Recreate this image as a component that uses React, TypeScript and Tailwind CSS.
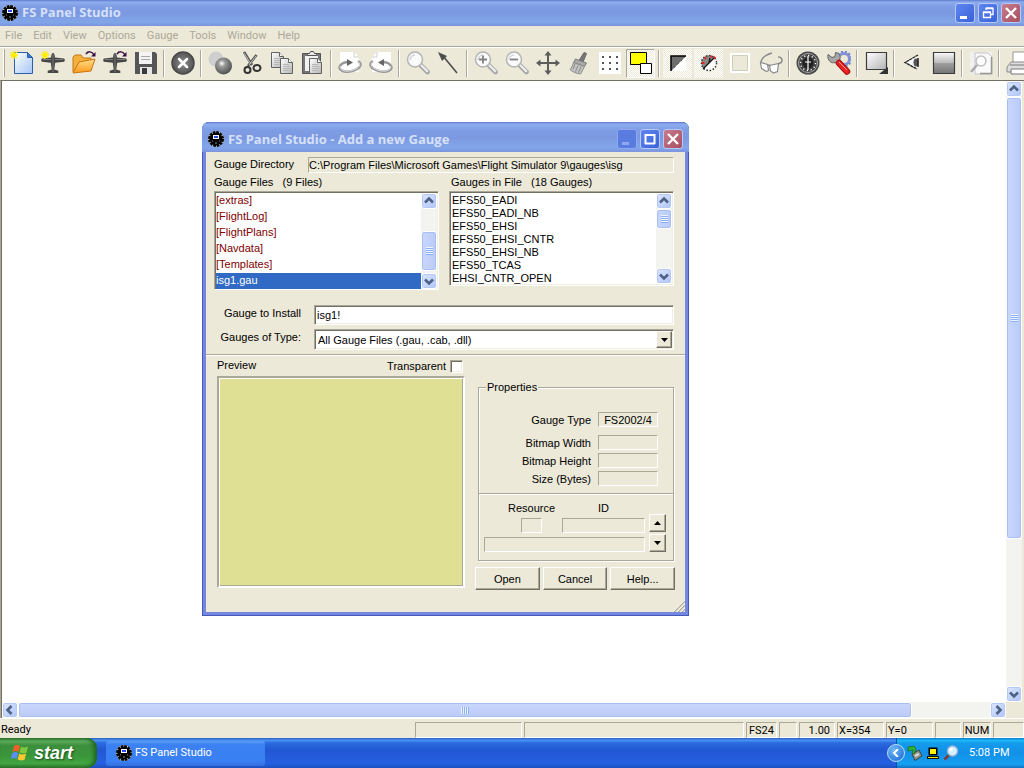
import React, { useState } from 'react';

const gaugeFiles = ['[extras]', '[FlightLog]', '[FlightPlans]', '[Navdata]', '[Templates]', 'isg1.gau'];
const gauges = [
  'EFS50_EADI',
  'EFS50_EADI_NB',
  'EFS50_EHSI',
  'EFS50_EHSI_CNTR',
  'EFS50_EHSI_NB',
  'EFS50_TCAS',
  'EHSI_CNTR_OPEN',
];
const menus = ['File', 'Edit', 'View', 'Options', 'Gauge', 'Tools', 'Window', 'Help'];

const titleBar = 'bg-[linear-gradient(#5f7bd0,#8eadee_8%,#7f9de4_25%,#7b98e0_50%,#82a6e9_85%,#7b95df)]';
const sunken = 'border border-[#aca899] border-r-white border-b-white';
const deepSunken =
  'border border-[#aca899] border-r-white border-b-white shadow-[inset_1px_1px_0_#716f64,inset_-1px_-1px_0_#f1efe2]';
const raised =
  'border border-white border-r-[#716f64] border-b-[#716f64] bg-[#ece9d8] shadow-[inset_-1px_-1px_0_#aca899]';
const checker = 'bg-[repeating-conic-gradient(#ffffff_0_25%,#ece9d8_0_50%)] bg-[length:2px_2px]';

// Shared gradients for the toolbar drawings
const Gradients = () => (
  <svg width="0" height="0" className="absolute" aria-hidden="true">
    <defs>
      <linearGradient id="paper" x1="0" y1="0" x2="1" y2="1">
        <stop offset="0" stopColor="#ffffff" />
        <stop offset="1" stopColor="#a5c6f3" />
      </linearGradient>
      <linearGradient id="folder" x1="0" y1="0" x2="0" y2="1">
        <stop offset="0" stopColor="#ffe08a" />
        <stop offset="1" stopColor="#f79a1c" />
      </linearGradient>
      <linearGradient id="steel" x1="0" y1="0" x2="1" y2="1">
        <stop offset="0" stopColor="#ffffff" />
        <stop offset="1" stopColor="#b4b4b4" />
      </linearGradient>
      <linearGradient id="screen" x1="0" y1="0" x2="0" y2="1">
        <stop offset="0" stopColor="#fafafa" />
        <stop offset="0.5" stopColor="#b9b9b9" />
        <stop offset="0.5" stopColor="#a0a0a0" />
        <stop offset="1" stopColor="#757575" />
      </linearGradient>
      <radialGradient id="ball" cx="0.4" cy="0.35" r="0.65">
        <stop offset="0" stopColor="#ffffff" />
        <stop offset="0.3" stopColor="#9b9b9b" />
        <stop offset="1" stopColor="#505050" />
      </radialGradient>
      <radialGradient id="disc" cx="0.5" cy="0.5" r="0.5">
        <stop offset="0" stopColor="#8b8b8b" />
        <stop offset="1" stopColor="#555555" />
      </radialGradient>
    </defs>
  </svg>
);

const Icon: React.FC<{ children: React.ReactNode; className?: string }> = ({ children, className = '' }) => (
  <svg viewBox="0 0 24 24" className={`size-6 shrink-0 ${className}`} fill="none" aria-hidden="true">
    {children}
  </svg>
);

const AppIcon = () => (
  <svg viewBox="0 0 16 16" className="size-4 shrink-0" aria-hidden="true">
    <circle cx="8" cy="8" r="8" fill="#e4e9f5" />
    <circle cx="8" cy="8" r="6.4" fill="#000" />
    <circle cx="8" cy="8" r="7" fill="none" stroke="#000" strokeWidth="2" strokeDasharray="2.9 0.765" />
    <path d="M5 4h6v4H5z" fill="#fff" />
    <path d="M6 5h4v2H6z" fill="#2a4bea" />
    <path d="M4 10h1M11 10h1M7 12h2" stroke="#888" />
  </svg>
);

const Spark = () => <path d="M4 0v8M0 4h8M1 1l6 6M7 1L1 7" stroke="#ffee00" strokeWidth="1.3" />;
const RedoMark = () => (
  <>
    <path d="M14 3c2-3 6-3 8 1" stroke="#3d0d45" strokeWidth="1.5" />
    <path d="M23.500 1v4.500h-4.500z" fill="#3d0d45" />
  </>
);
const Plane = () => (
  <>
    <path
      d="M12 2c1.200 0 1.800 1.600 1.900 4.500L23 7.500c1 .3 1 3 0 3.200l-8.800 1-.9 6.800 4 1.200v2.300H6.700v-2.300l4-1.200-.9-6.800-8.800-1c-1-.2-1-2.900 0-3.200l9.100-1C10.200 3.600 10.800 2 12 2z"
      fill="#474747"
    />
    <path d="M2 8.500h8M14 8.500h8" stroke="#7c7c7c" />
    <path d="M12 3v18" stroke="#777" />
  </>
);
const Lens = () => (
  <>
    <path d="M15 14.500l6.500 6.500" stroke="#a4a4a4" strokeWidth="4.600" strokeLinecap="round" />
    <path d="M15 14l6.200 6.200" stroke="#ececec" strokeWidth="2.400" strokeLinecap="round" />
    <circle cx="9" cy="8.500" r="7.500" fill="#fafafa" stroke="#b4b4b4" strokeWidth="1.500" />
    <path d="M4 9a5 5 0 0 1 5-5" stroke="#d4d4d4" strokeWidth="1.500" />
  </>
);
const Sheet = ({ x, y }: { x: number; y: number }) => (
  <g transform={`translate(${x} ${y})`}>
    <path d="M.5.5h8l4 4v11H.5z" fill="url(#steel)" stroke="#626262" />
    <path d="M8.500.5v4h4" fill="#fff" stroke="#626262" />
    <path d="M3 6.500h6M3 8.500h7M3 10.500h7M3 12.500h5" stroke="#b6b6b6" />
  </g>
);

const toolGroups: { label: string; icon: React.ReactNode; look?: string }[][] = [
  [
    {
      label: 'New panel',
      icon: (
        <Icon>
          <path d="M4.500 1.500h13l5 5v16h-18z" fill="url(#paper)" stroke="#2b5fae" />
          <path d="M17.500 1.500v5h5z" fill="#3b78cf" stroke="#2b5fae" />
          <Spark />
        </Icon>
      ),
    },
    { label: 'New aircraft', icon: <Icon><Plane /><Spark /></Icon> },
    {
      label: 'Open panel',
      icon: (
        <Icon>
          <path d="M1 21V6l2-2h6l2 3h8v4" fill="#f4b03c" stroke="#cc7412" />
          <path d="M1 22l6-11 16-3-4 12z" fill="url(#folder)" stroke="#cc7412" />
          <RedoMark />
        </Icon>
      ),
    },
    { label: 'Open aircraft', icon: <Icon><Plane /><RedoMark /></Icon> },
    {
      label: 'Save',
      icon: (
        <Icon>
          <path d="M1 1h20l2 2v20H1z" fill="#565656" />
          <path d="M5 1h13v12H5z" fill="#f4f4f4" />
          <path d="M7 5.500h9M7 8.500h9" stroke="#a8a8a8" />
          <path d="M6 16h12v7H6z" fill="#e6e6e6" />
          <path d="M8 17h5v6H8z" fill="#3b3b3b" />
        </Icon>
      ),
    },
  ],
  [
    {
      label: 'Close',
      icon: (
        <Icon>
          <circle cx="12" cy="12" r="11" fill="url(#disc)" stroke="#484848" strokeWidth="1.500" />
          <path d="M8 8l8 8M16 8l-8 8" stroke="#fff" strokeWidth="2.500" strokeLinecap="round" />
        </Icon>
      ),
    },
  ],
  [
    {
      label: 'Gauge properties',
      icon: (
        <Icon>
          <circle cx="8" cy="8" r="7.500" fill="#cfcfcf" />
          <circle cx="15.500" cy="15" r="8.500" fill="url(#ball)" />
        </Icon>
      ),
    },
    {
      label: 'Cut',
      icon: (
        <Icon>
          <path d="M5 1l8 13M17.500 4L9 15" stroke="#555" strokeWidth="2.600" />
          <path d="M5 2l7 11M17 5l-7 9" stroke="#ccc" strokeWidth="0.900" />
          <circle cx="8.500" cy="19" r="3" stroke="#333" strokeWidth="2" />
          <ellipse cx="18" cy="17" rx="3.500" ry="3" stroke="#333" strokeWidth="2" />
        </Icon>
      ),
    },
    { label: 'Copy', icon: <Icon><Sheet x={1} y={1} /><Sheet x={10} y={7} /></Icon> },
    {
      label: 'Paste',
      icon: (
        <Icon>
          <path d="M1.500 2.500h18v20h-18z" fill="#777" stroke="#555" />
          <path d="M4 5h13v15H4z" fill="#f2f2f2" />
          <path d="M6.500 4.500v-2h2l1-2h3l1 2h2v2z" fill="#e8e8e8" stroke="#555" />
          <Sheet x={8} y={7} />
        </Icon>
      ),
    },
  ],
  [
    {
      label: 'Undo',
      icon: (
        <Icon>
          <path d="M2 1h14l5 5v15H2z" fill="#fff" />
          <path d="M16 1v5h5" stroke="#cfcfcf" />
          <path d="M20 10c5 3 2 8-6 10-8 2-14-1-12-5 1.500-3 5-4 9-4" stroke="#979797" strokeWidth="2.600" />
          <path d="M20 10.500c4 3 1 7-6 9-8 2-13-1-11.500-4.500" stroke="#e4e4e4" />
          <path d="M9 8l6 3.500L9 15z" fill="#666" />
        </Icon>
      ),
    },
    {
      label: 'Redo',
      icon: (
        <Icon>
          <path d="M3 6l5-5h14v20H3z" fill="#fff" />
          <path d="M8 1v5H3" stroke="#cfcfcf" />
          <path d="M4 10c-5 3-2 8 6 10 8 2 14-1 12-5-1.500-3-5-4-9-4" stroke="#979797" strokeWidth="2.600" />
          <path d="M4 10.500c-4 3-1 7 6 9 8 2 13-1 11.500-4.500" stroke="#e4e4e4" />
          <path d="M15 8l-6 3.500 6 3.500z" fill="#666" />
        </Icon>
      ),
    },
  ],
  [
    { label: 'Find', icon: <Icon><Lens /></Icon> },
    {
      label: 'Select',
      icon: (
        <Icon>
          <path d="M6 5l14 17" stroke="#4d4d4d" strokeWidth="1.600" />
          <path d="M1 1l9 4-5 5z" fill="#4d4d4d" />
        </Icon>
      ),
    },
  ],
  [
    { label: 'Zoom in', icon: <Icon><Lens /><path d="M9 4.500v8M5 8.500h8" stroke="#808080" strokeWidth="1.800" /></Icon> },
    { label: 'Zoom out', icon: <Icon><Lens /><path d="M5 8.500h8" stroke="#808080" strokeWidth="1.800" /></Icon> },
    {
      label: 'Move',
      icon: (
        <Icon>
          <path d="M12 2v20M2 12h20" stroke="#5c5c5c" strokeWidth="2" />
          <path d="M12 0l3.500 4.500h-7zM12 24l3.500-4.500h-7zM0 12l4.500-3.500v7zM24 12l-4.500-3.500v7z" fill="#5c5c5c" />
        </Icon>
      ),
    },
    {
      label: 'Brush',
      icon: (
        <Icon>
          <path d="M17 1.500l2.500 1-3.500 8.500-4-1.500z" fill="#777" stroke="#666" />
          <path d="M8.500 8l11 4-2 3.500L6.500 11.500z" fill="#aaa" stroke="#777" />
          <path d="M6.500 11.500L17.500 15.500l-4 7.500c-4-.5-8-2-10.500-4.500 1.500-1.500 2.500-4 3.500-7z" fill="#c4c4c4" stroke="#8a8a8a" />
          <path d="M8 13l-2 5M11 14.500l-2.500 6M14 15.500l-2.500 6" stroke="#888" />
        </Icon>
      ),
    },
    {
      label: 'Grid',
      icon: (
        <Icon>
          <path d="M1 1h22v22H1z" fill="#fff" />
          <path d="M4 5h2v2H4zM11 5h2v2h-2zM18 5h2v2h-2zM4 11h2v2H4zM11 11h2v2h-2zM18 11h2v2h-2zM4 17h2v2H4zM11 17h2v2h-2zM18 17h2v2h-2z" fill="#555" />
        </Icon>
      ),
    },
    {
      label: 'Arrange',
      look: `${checker} border border-[#aca899] border-r-white border-b-white`,
      icon: (
        <Icon>
          <path d="M1.500 1.500h16v12h-16z" fill="#ffff00" stroke="#000" />
          <path d="M11.500 12.500h11v10h-11z" fill="#fff" stroke="#000" />
        </Icon>
      ),
    },
  ],
  [
    {
      label: 'Night view',
      look: checker,
      icon: (
        <Icon>
          <path d="M5 5h15L5 20z" fill="#6e6e6e" />
          <path d="M20 5v15H5z" fill="#fff" />
          <path d="M5 20V5h15" stroke="#000" strokeWidth="1.500" />
          <path d="M20 5L5 20" stroke="#333" strokeDasharray="1 1" />
        </Icon>
      ),
    },
    {
      label: 'Night gauges',
      look: checker,
      icon: (
        <Icon>
          <circle cx="12" cy="12" r="7.500" fill="#fff" />
          <path d="M17.500 6.500A7.600 7.600 0 0 0 6.500 17.500z" fill="#888" />
          <circle cx="12" cy="12" r="7.500" stroke="#333" strokeWidth="1.500" strokeDasharray="1.500 1.700" />
          <path d="M6 18L18 6M12 12l1-5" stroke="#111" strokeWidth="1.300" />
          <path d="M5 12h2.500M7.500 6.500l1.500 1.500M17 6l1.500 1.500M14 4.500v2" stroke="#f02020" strokeWidth="1.800" />
        </Icon>
      ),
    },
    {
      label: 'Frame',
      icon: (
        <Icon>
          <path d="M3 3h18v18H3z" stroke="#fff" strokeWidth="2" />
          <path d="M4.500 4.500h15v15h-15z" stroke="#cfccba" />
        </Icon>
      ),
    },
    {
      label: 'Preview',
      icon: (
        <Icon>
          <path d="M2 12C2 7 6 4 13 2M22 12c2-3 1-6-3-6" stroke="#8c8c8c" strokeWidth="1.500" />
          <path d="M1.500 11.500l7 2 1 6-2 1-5-3zM10.500 14.500l9-2-1 8-4 1.500-3-2z" fill="#fff" stroke="#8a8a8a" strokeWidth="1.200" />
          <path d="M8.500 14l3 .5M19 13l3-1.500" stroke="#8a8a8a" strokeWidth="1.500" />
        </Icon>
      ),
    },
  ],
  [
    {
      label: 'Add gauge',
      icon: (
        <Icon>
          <circle cx="12" cy="12" r="11.500" fill="#484848" />
          <circle cx="12" cy="12" r="9.500" fill="#444" stroke="#aaa" />
          <circle cx="12" cy="12" r="7.500" stroke="#fff" strokeWidth="1.400" strokeDasharray="1.200 2.700" />
          <circle cx="12" cy="12" r="5.500" fill="#222" />
          <path d="M12 5v14M9 11h6" stroke="#fff" strokeWidth="1.200" />
        </Icon>
      ),
    },
    {
      label: 'Tools',
      icon: (
        <Icon>
          <circle cx="17" cy="8" r="5.500" stroke="#8291d4" strokeWidth="3" />
          <circle cx="17" cy="8" r="7.500" stroke="#6577c5" strokeWidth="1.500" strokeDasharray="2 2" />
          <path d="M1 3.500l4 3 3-1 .5-4C13 2 14 6 12.500 9l2 2-4 3-2-2.500C4 13 0 9 1 3.500z" fill="#a7a7a7" stroke="#626262" />
          <path d="M12 12l8 8.500" stroke="#9f1010" strokeWidth="6.500" strokeLinecap="round" />
          <path d="M12 12l8 8.500" stroke="#ee2222" strokeWidth="4.500" strokeLinecap="round" />
          <path d="M12 11l8 8" stroke="#ff9b8e" />
        </Icon>
      ),
    },
  ],
  [
    {
      label: 'Background',
      icon: (
        <Icon>
          <path d="M2.500 1.500h20v17h-20z" fill="url(#steel)" stroke="#3c3c3c" strokeWidth="1.200" />
          <path d="M24 16v7h-9z" fill="#333" />
        </Icon>
      ),
    },
  ],
  [
    {
      label: 'View',
      icon: (
        <Icon>
          <path d="M15 5c4 3 4 10 0 13L5 11.500z" fill="#f8f8f8" />
          <path d="M17 4L4 11.500 16 18" stroke="#222" strokeWidth="1.400" strokeDasharray="3 0.500" />
          <ellipse cx="15" cy="11.500" rx="2.500" ry="4" fill="#555" />
          <path d="M17 7v9" stroke="#222" strokeWidth="1.500" />
        </Icon>
      ),
    },
    {
      label: 'Shading',
      icon: (
        <Icon>
          <path d="M1.500 1.500h21v21h-21z" fill="url(#screen)" stroke="#3c3c3c" strokeWidth="1.200" />
        </Icon>
      ),
    },
  ],
  [
    {
      label: 'Print preview',
      icon: (
        <Icon>
          <path d="M1 1h22v22H1z" fill="#f1f1f1" />
          <path d="M6 2h13l4 4v17H6z" fill="#fafafa" stroke="#c4c4c4" />
          <path d="M22.500 6v16.500H11" stroke="#969696" strokeWidth="1.500" />
          <circle cx="12" cy="10" r="5" fill="#fff" stroke="#c0c0c0" strokeWidth="1.500" />
          <path d="M8 14l-6 7" stroke="#aaa" strokeWidth="2.500" />
        </Icon>
      ),
    },
  ],
  [
    {
      label: 'Print',
      icon: (
        <Icon>
          <path d="M7 12V1h12v11" fill="#fff" stroke="#999" />
          <path d="M1 16l4-5h18v10H1z" fill="#ddd" stroke="#8a8a8a" />
          <path d="M4 14h18M5 18h18v5H5z" fill="#fff" stroke="#777" />
        </Icon>
      ),
    },
  ],
];

type Direction = 'up' | 'down' | 'left' | 'right';
const chevrons: Record<Direction, string> = {
  up: 'M4 9.500l4-4 4 4',
  down: 'M4 6.500l4 4 4-4',
  left: 'M9.500 4l-4 4 4 4',
  right: 'M6.500 4l4 4-4 4',
};

const ScrollButton: React.FC<{ dir: Direction }> = ({ dir }) => (
  <button
    type="button"
    aria-label={`Scroll ${dir}`}
    className="size-4 shrink-0 rounded-[3px] border border-white bg-[linear-gradient(135deg,#dce6fe,#b0c5f7)] shadow-[inset_0_0_0_1px_#b5c8f5]"
  >
    <svg viewBox="0 0 16 16" className="-m-px size-4" fill="none" stroke="#4d6185" strokeWidth="2.600">
      <path d={chevrons[dir]} />
    </svg>
  </button>
);

// XP scrollbar; thumbClass sets where the thumb starts and how long it is
const ScrollBar: React.FC<{ horizontal?: boolean; thumbClass: string }> = ({ horizontal, thumbClass }) => (
  <div className={`flex bg-[#f3f3ef] ${horizontal ? 'h-4 flex-row' : 'w-4 flex-col'}`}>
    <ScrollButton dir={horizontal ? 'left' : 'up'} />
    <div className={`flex flex-1 ${horizontal ? 'flex-row' : 'flex-col'}`}>
      <div
        className={`flex items-center justify-center rounded-[3px] border border-white shadow-[inset_0_0_0_1px_#a9bff0] ${
          horizontal ? 'h-4 bg-[linear-gradient(#c9d7fc,#bacbf9)]' : 'w-4 bg-[linear-gradient(90deg,#c9d7fc,#bacbf9)]'
        } ${thumbClass}`}
      >
        <div
          className={
            horizontal
              ? 'h-[7px] w-2 bg-[repeating-linear-gradient(90deg,#eef4fe_0_1px,#8cb0f8_1px_2px)]'
              : 'h-2 w-[7px] bg-[repeating-linear-gradient(#eef4fe_0_1px,#8cb0f8_1px_2px)]'
          }
        />
      </div>
    </div>
    <ScrollButton dir={horizontal ? 'right' : 'down'} />
  </div>
);

const CaptionButton: React.FC<{ kind: 'minimize' | 'restore' | 'maximize' | 'close'; faded?: boolean }> = ({ kind, faded }) => (
  <button
    type="button"
    aria-label={kind}
    className={`flex size-5 items-center justify-center rounded-[3px] border ${faded ? 'border-[#8fa9ee]' : 'border-[#b9c9f5]'} ${
      kind === 'close'
        ? 'bg-[linear-gradient(135deg,#c57c8c,#a84f60)]'
        : faded
          ? 'bg-[#5a7be0]'
          : 'bg-[linear-gradient(135deg,#5e86f0,#3a62da)]'
    }`}
  >
    <svg viewBox="0 0 18 18" className="size-[18px]" fill="none" stroke={faded ? '#8fa9ee' : '#fff'}>
      {kind === 'minimize' && <path d="M4 13.500h7" strokeWidth="3" />}
      {kind === 'maximize' && <path d="M4.500 4v10M13.500 4v10M4 13.500h10M4 5h10" strokeWidth="2" />}
      {kind === 'restore' && <path d="M7 6V4.500h7v6h-2M4.500 8.500h7v5h-7zM4 8h8M7 4h7" strokeWidth="1.300" />}
      {kind === 'close' && <path d="M4 4l10 10M14 4L4 14" strokeWidth="2.400" />}
    </svg>
  </button>
);

const ReadOnlyRow: React.FC<{ id: string; label: string; value?: string }> = ({ id, label, value = '' }) => (
  <div className="flex h-[15px] items-center justify-end gap-[7px]">
    <label htmlFor={id}>{label}</label>
    <input id={id} readOnly value={value} className={`h-[15px] w-[60px] text-center ${sunken}`} />
  </div>
);

const DialogButton: React.FC<{ children: React.ReactNode }> = ({ children }) => (
  <button type="button" className={`h-[23px] flex-1 ${raised}`}>
    {children}
  </button>
);

const SpinButton: React.FC<{ label: string; up?: boolean }> = ({ label, up }) => (
  <button type="button" aria-label={label} className={`flex h-[18px] w-[17px] items-center justify-center ${raised}`}>
    <svg viewBox="0 0 7 4" className="h-1 w-[7px]" fill="#000">
      <path d={up ? 'M0 4l3.500-4L7 4z' : 'M0 0l3.500 4L7 0z'} />
    </svg>
  </button>
);

const AddGaugeDialog = () => {
  const [file, setFile] = useState('isg1.gau');
  const [install, setInstall] = useState('isg1!');

  return (
    <section
      role="dialog"
      aria-label="Add a new Gauge"
      className="absolute top-[122px] left-[202px] w-[487px] rounded-t-[7px] bg-[#7488e0] p-1 pt-0 font-['Liberation_Sans',Arial,sans-serif] text-[11px] leading-4 shadow-[inset_0_0_0_1px_#4359bb]"
    >
      <header className={`-mx-1 flex h-[30px] items-center gap-1 rounded-t-[7px] px-[6px] pt-[3px] ${titleBar}`}>
        <AppIcon />
        <h2 className="flex-1 font-['Open_Sans',sans-serif] text-[13px] font-bold text-[#d6e0fa]">
          FS Panel Studio - Add a new Gauge
        </h2>
        <div className="flex gap-[3px]">
          <CaptionButton kind="minimize" faded />
          <CaptionButton kind="maximize" />
          <CaptionButton kind="close" />
        </div>
      </header>

      <div className="bg-[#ece9d8] pt-[5px]">
        <div className="pr-[11px] pl-2">
          <div className="flex">
            <label htmlFor="directory" className="w-[94px] leading-[14px]">Gauge Directory</label>
            <input
              id="directory"
              readOnly
              value="C:\Program Files\Microsoft Games\Flight Simulator 9\gauges\isg"
              className={`h-4 min-w-0 flex-1 ${sunken}`}
            />
          </div>

          <div className="grid grid-cols-2 items-start gap-[10px]">
            <div>
              <h3 id="files-label" className="h-[18px] leading-[18px]">Gauge Files &nbsp; (9 Files)</h3>
              <div className={`flex bg-white p-px pb-0 ${deepSunken}`}>
                <ul role="listbox" aria-labelledby="files-label" className="flex-1">
                  {gaugeFiles.map((name) => (
                    <li
                      key={name}
                      role="option"
                      aria-selected={name === file}
                      onClick={() => setFile(name)}
                      className={`h-4 leading-[14px] ${name === file ? 'bg-[#316ac5] text-white' : 'text-[#800000]'}`}
                    >
                      {name}
                    </li>
                  ))}
                </ul>
                <ScrollBar thumbClass="mt-[22px] h-10" />
              </div>
            </div>
            <div>
              <h3 id="gauges-label" className="h-[18px] pl-0.5 leading-[18px]">Gauges in File &nbsp; (18 Gauges)</h3>
              <div className={`flex bg-white p-px ${deepSunken}`}>
                <ul role="listbox" aria-labelledby="gauges-label" className="flex-1">
                  {gauges.map((name) => (
                    <li key={name} role="option" aria-selected={false} className="h-[13px] pl-px leading-[14px]">
                      {name}
                    </li>
                  ))}
                </ul>
                <ScrollBar thumbClass="h-5" />
              </div>
            </div>
          </div>

          <div className="mt-[15px] grid grid-cols-[87px_1fr] gap-x-[13px] gap-y-1 pb-1">
            <label htmlFor="install" className="text-right">Gauge to Install</label>
            <input
              id="install"
              value={install}
              onChange={(e) => setInstall(e.target.value)}
              className={`h-5 w-full bg-white px-0.5 ${deepSunken}`}
            />
            <label htmlFor="type" className="text-right">Gauges of Type:</label>
            <div className="relative">
              <select id="type" className={`block h-[21px] w-full appearance-none bg-white px-[3px] ${deepSunken}`}>
                <option>All Gauge Files (.gau, .cab, .dll)</option>
              </select>
              <span className={`pointer-events-none absolute top-0.5 right-0.5 flex h-[17px] w-4 items-center justify-center ${raised}`}>
                <svg viewBox="0 0 7 4" className="h-1 w-[7px]"><path d="M0 0l3.500 4L7 0z" /></svg>
              </span>
            </div>
          </div>
        </div>

        <hr className="h-0.5 border-t border-b border-t-[#aca899] border-b-white" />

        <div className="flex gap-[10px] pr-[10px] pl-[11px]">
          <div className="flex flex-1 flex-col pt-px">
            <div className="flex h-[19px] items-start justify-between">
              <span>Preview</span>
              <label className="flex items-center gap-1 pt-px pr-0.5">
                Transparent
                <input type="checkbox" className={`size-[13px] appearance-none bg-white ${deepSunken}`} />
              </label>
            </div>
            <div className="h-[212px] border-2 border-[#aca899] border-r-white border-b-white bg-[#e0e094] shadow-[inset_1px_1px_0_#fff,inset_-1px_-1px_0_#aca899]" />
          </div>

          <div className="w-[200px] pt-[31px]">
            <fieldset className="relative mr-px ml-[3px] border border-[#aca899] pt-6 shadow-[1px_1px_0_#fff,inset_1px_1px_0_#fff]">
              <legend className="absolute -top-[9px] left-[7px] bg-[#ece9d8] px-px">Properties</legend>
              <div className="flex flex-col gap-[3px] pr-[15px]">
                <div className="mb-[5px]">
                  <ReadOnlyRow id="gauge-type" label="Gauge Type" value="FS2002/4" />
                </div>
                <ReadOnlyRow id="bitmap-width" label="Bitmap Width" />
                <ReadOnlyRow id="bitmap-height" label="Bitmap Height" />
                <ReadOnlyRow id="size" label="Size (Bytes)" />
              </div>
              <hr className="mt-[7px] h-0.5 border-t border-b border-t-[#aca899] border-b-white" />
              <div className="flex items-end gap-1 pt-[5px] pr-[7px] pb-2 pl-[5px]">
                <div className="flex flex-1 flex-col gap-1">
                  <div className="flex justify-between">
                    <label className="flex flex-col items-center gap-0.5 pl-6">
                      Resource
                      <input readOnly className={`h-[15px] w-[21px] ${sunken}`} />
                    </label>
                    <label className="flex flex-col items-center gap-0.5">
                      ID
                      <input readOnly className={`h-[15px] w-[83px] ${sunken}`} />
                    </label>
                  </div>
                  <input readOnly aria-label="Resource name" className={`h-[15px] w-full ${sunken}`} />
                </div>
                <div className="flex flex-col gap-0.5">
                  <SpinButton label="Next resource" up />
                  <SpinButton label="Previous resource" />
                </div>
              </div>
            </fieldset>
            <div className="mt-[6px] flex gap-[3px]">
              <DialogButton>Open</DialogButton>
              <DialogButton>Cancel</DialogButton>
              <DialogButton>Help...</DialogButton>
            </div>
          </div>
        </div>

        <footer className="flex h-[22px] items-end justify-end">
          <svg viewBox="0 0 12 12" className="size-3" fill="none">
            <path d="M1 12L12 1M5 12l7-7M9 12l3-3" stroke="#aca899" strokeWidth="1.500" />
            <path d="M0 12L12 0M4 12l8-8M8 12l4-4" stroke="#fff" strokeWidth="0.800" />
          </svg>
        </footer>
      </div>
    </section>
  );
};

const StatusBar = () => (
  <footer className="flex h-5 gap-0.5 border-t border-white bg-[#ece9d8] pt-[3px] font-['Roboto',sans-serif] text-[11px] leading-[15px]">
    <span className="w-[413px] pl-px">Ready</span>
    <span className={`w-[107px] ${sunken}`} />
    <span className={`flex-1 ${sunken}`} />
    <span className={`w-[31px] text-center ${sunken}`}>FS24</span>
    <span className={`w-[18px] ${sunken}`} />
    <span className={`w-9 pr-1 text-right ${sunken}`}>1.00</span>
    <span className={`w-[47px] pl-px ${sunken}`}>X=354</span>
    <span className={`w-[47px] pl-px ${sunken}`}>Y=0</span>
    <span className={`w-[26px] ${sunken}`} />
    <span className={`w-[28px] text-center ${sunken}`}>NUM</span>
    <span className={`w-[31px] ${sunken}`} />
  </footer>
);

const TaskBar = () => (
  <nav className="flex h-[30px] bg-[linear-gradient(#2a5fc9,#4a92ee_8%,#2b6be0_16%,#2257d3_40%,#2560e0_85%,#1d4fbd)] font-['Roboto',sans-serif] text-[11px] text-white">
    <button
      type="button"
      className="flex w-[97px] items-center gap-1 rounded-r-[10px] bg-[linear-gradient(#2f7a31,#5fae5f_10%,#3c8f3d_25%,#3a963a_60%,#43a543_85%,#2f7d2f)] pl-[10px] shadow-[inset_-3px_0_4px_#1f6420]"
    >
      <svg viewBox="0 0 20 18" className="h-[18px] w-5 shrink-0">
        <path d="M4 2c2-1.500 4-1.500 6 0L8.500 8c-2-1.200-4-1.200-6 .2z" fill="#f2602a" />
        <path d="M11 2.600c2 1.200 4 1.200 7-.2l-1.500 6c-2.500 1.400-5 1.300-7 .2z" fill="#7fc83c" />
        <path d="M2.200 9.200c2-1.400 4-1.400 6-.2l-1.500 6c-2-1.200-4-1.200-6 .2z" fill="#5b8ff5" />
        <path d="M9.200 9.600c2 1.200 4.500 1.200 7-.2l-1.500 6c-2.500 1.400-5 1.300-7 .2z" fill="#fbc92e" />
      </svg>
      <span className="font-['Liberation_Sans',Arial,sans-serif] text-lg leading-none font-bold italic [text-shadow:1px_1px_2px_#1d4d1d]">
        start
      </span>
    </button>
    <div className="flex flex-1 items-center pl-[9px]">
      <button
        type="button"
        className="flex h-[25px] w-[159px] items-center gap-[3px] rounded-[3px] bg-[linear-gradient(#5c9bf8,#3c81f3_15%,#3980f4_80%,#3470dd)] pl-[10px]"
      >
        <AppIcon />
        FS Panel Studio
      </button>
    </div>
    <div className="flex w-32 items-center border-l border-[#0c4fa8] bg-[linear-gradient(#0d78cc,#1bb9f5_8%,#159bec_18%,#1290e8_50%,#16a0f0_88%,#0f6fc0)]">
      <button
        type="button"
        aria-label="Show hidden icons"
        className="-ml-[10px] flex size-[18px] shrink-0 items-center justify-center rounded-full border border-[#bfe0fb] bg-[radial-gradient(circle_at_35%_30%,#6cb8f8,#1665d0)]"
      >
        <svg viewBox="0 0 8 8" className="size-2" fill="none" stroke="#fff" strokeWidth="2"><path d="M6 0L2 4l4 4" /></svg>
      </button>
      <div className="flex flex-1 items-center gap-[3px] pl-0.5">
        <svg viewBox="0 0 16 16" className="size-4">
          <path d="M5 9l7-4 3 6-7 4.500z" fill="#8d9188" stroke="#3b463e" />
          <path d="M8 11l4-2.200" stroke="#ddd" strokeWidth="2" />
          <path d="M1 2l6-1 2 3-2 5-2-1 1-3-5 1z" fill="#2fae35" stroke="#186a1e" strokeWidth="0.700" />
        </svg>
        <svg viewBox="0 0 14 14" className="size-[14px]">
          <path d="M2.500 1.500h9v8h-9z" fill="#000" />
          <path d="M4 3h6v5H4z" fill="#fff200" />
          <path d="M1 11.500h12" stroke="#111" strokeWidth="3" />
          <path d="M2 11.500h10" stroke="#f4e400" />
        </svg>
        <svg viewBox="0 0 16 16" className="size-4" fill="none">
          <path d="M6.500 9.500l-5 5" stroke="#7a3b34" strokeWidth="2.500" />
          <circle cx="9.500" cy="6" r="5" fill="#d7effd" stroke="#9bb7d6" strokeWidth="1.300" />
          <circle cx="8" cy="4.500" r="1.800" fill="#fff" />
        </svg>
        <time className="pl-[7px]">5:08 PM</time>
      </div>
    </div>
  </nav>
);

const App: React.FC = () => {
  return (
    <div className="relative flex h-screen flex-col overflow-hidden bg-[#ece9d8] text-black">
      <Gradients />
      <header className={`flex h-[26px] shrink-0 items-center gap-1 pr-[3px] pl-0.5 ${titleBar}`}>
        <AppIcon />
        <h1 className="flex-1 font-['Open_Sans',sans-serif] text-[13px] font-bold text-[#d6e0fa]">FS Panel Studio</h1>
        <div className="flex gap-[3px]">
          <CaptionButton kind="minimize" />
          <CaptionButton kind="restore" />
          <CaptionButton kind="close" />
        </div>
      </header>

      <nav className="flex h-5 shrink-0 items-center gap-[11px] pl-[5px] font-['Roboto',sans-serif] text-[11px] text-[#aca899]">
        {menus.map((name) => (
          <button key={name} type="button">{name}</button>
        ))}
      </nav>

      <div className="flex h-[34px] shrink-0 items-center overflow-hidden border-t border-[#aca899] pb-px pl-[3px] shadow-[inset_0_1px_0_#fff]">
        <span className="mr-px h-[28px] w-0.5 shrink-0 border-r border-l border-r-[#aca899] border-l-white" />
        {toolGroups.map((group, i) => (
          <React.Fragment key={i}>
            {i > 0 && (
              <span className="flex w-[6px] shrink-0 justify-center">
                <span className="h-[27px] w-0.5 border-r border-l border-r-white border-l-[#aca899]" />
              </span>
            )}
            {group.map((tool) => (
              <button
                key={tool.label}
                type="button"
                title={tool.label}
                className="flex h-[30px] w-[31px] shrink-0 items-center justify-center"
              >
                <span className={`flex h-[29px] w-[29px] items-center justify-center ${tool.look ?? ''}`}>{tool.icon}</span>
              </button>
            ))}
          </React.Fragment>
        ))}
      </div>

      <main className="flex min-h-0 flex-1 flex-col border-t border-l border-t-[#716f64] border-l-[#aca899] shadow-[inset_1px_0_0_#716f64]">
        <div className="flex min-h-0 flex-1 pr-0.5 pl-px">
          <div className="flex-1 bg-white" />
          <ScrollBar thumbClass="h-[75%]" />
        </div>
        <div className="flex pr-[18px] pl-px">
          <div className="flex-1">
            <ScrollBar horizontal thumbClass="w-[92%]" />
          </div>
        </div>
      </main>

      <StatusBar />
      <TaskBar />
      <AddGaugeDialog />
    </div>
  );
};

export default App;
